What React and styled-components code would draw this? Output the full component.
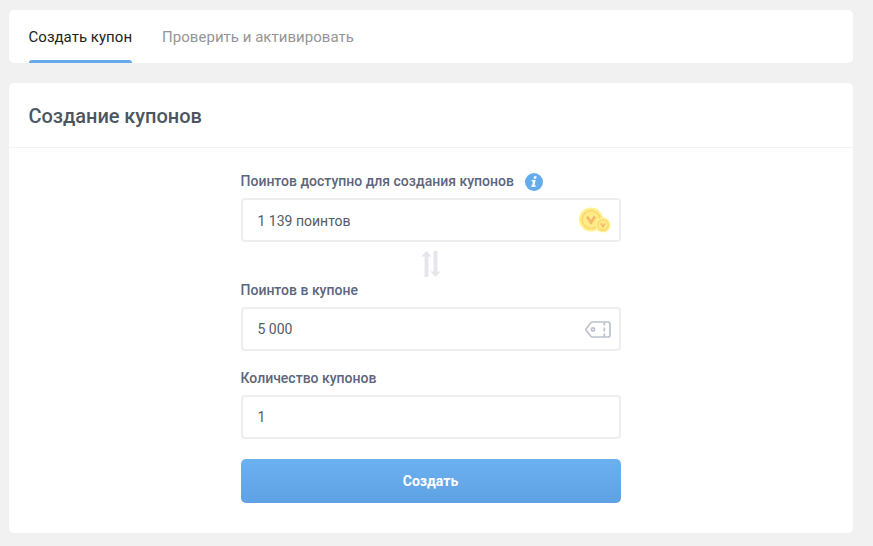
import React, { useState } from 'react';
import styled, { createGlobalStyle } from 'styled-components';

const GlobalStyle = createGlobalStyle`
  * {
    box-sizing: border-box;
  }

  body {
    margin: 0;
    background: #f1f1f1;
    font-family: Roboto, 'Liberation Sans', sans-serif;
  }
`;

const Page = styled.main`
  min-height: 546px;
  padding: 10px 20px 13px 9px;
`;

const Card = styled.section`
  background: #fff;
  border-radius: 5px;
`;

const Tabs = styled(Card)`
  display: flex;
  gap: 30px;
  height: 53px;
  padding: 0 19.5px;
  margin-bottom: 20px;
`;

const Tab = styled.button`
  display: flex;
  flex-direction: column;
  justify-content: space-between;
  height: 53px;
  padding: 17px 0 0;
  border: 0;
  background: none;
  font-family: inherit;
  font-size: 15px;
  line-height: 20px;
  letter-spacing: 0.03px;
  white-space: nowrap;
  color: ${props => (props.$active ? '#222' : '#959595')};
  cursor: pointer;

  &::after {
    content: '';
    width: 100%;
    height: 3px;
    border-radius: 3px 3px 0 0;
    background: ${props => (props.$active ? '#64a9e9' : 'transparent')};
  }
`;

const Panel = styled(Card)`
  height: 450px;
`;

const PanelHeader = styled.header`
  display: flex;
  align-items: center;
  height: 65px;
  padding: 2px 20px 0 19.5px;
  border-bottom: 1px solid #f3f3f3;
`;

const Title = styled.h1`
  margin: 0;
  font-size: 20px;
  line-height: 24px;
  font-weight: 500;
  letter-spacing: -0.05px;
  color: #4d5660;
`;

const Form = styled.form`
  display: flex;
  flex-direction: column;
  width: 380px;
  margin-left: 232px;
  padding-top: 23px;
`;

const Label = styled.label`
  display: flex;
  align-items: center;
  gap: 11px;
  height: 20px;
  margin: 0 0 7px -0.5px;
  font-size: 14px;
  font-weight: 500;
  color: #5c667c;

  svg {
    margin-top: 2px;
  }
`;

const InputBox = styled.div`
  display: flex;
  align-items: center;
  height: 44px;
  margin-bottom: ${props => props.$gap || 0}px;
  padding: 0 8px 0 14.5px;
  border: 2px solid #eee;
  border-radius: 4px;
`;

const Input = styled.input`
  flex: 1;
  min-width: 0;
  padding: ${props => (props.readOnly ? '1px 0 0' : '0 0 1px')};
  border: 0;
  outline: 0;
  background: none;
  font-family: inherit;
  font-size: 14px;
  line-height: 20px;
  color: #545c63;
`;

const Exchange = styled.div`
  display: flex;
  justify-content: center;
  height: 38px;
  padding-top: 9px;
`;

const SubmitButton = styled.button`
  height: 44px;
  padding: 0 1px 0 0;
  border: 0;
  border-radius: 5px;
  background: linear-gradient(#6bb0f1, #5fa2e3);
  font-family: inherit;
  font-size: 14px;
  font-weight: 700;
  color: #fff;
  cursor: pointer;
`;

const InfoIcon = () => (
  <svg width="18" height="18" viewBox="0 0 18 18">
    <circle cx="9" cy="9" r="9" fill="#65aced" />
    <path d="M9.1 3.2h2.5L11.1 5.8H8.6zM6.8 7h3.9l-1.2 5.3h1.2l-.3 1.6H6.3l.3-1.6h.6l.8-3.7H6.5z" fill="#fff" />
  </svg>
);

const CoinsIcon = () => (
  <svg width="32" height="26" viewBox="0 0 32 26">
    <circle cx="12" cy="12.5" r="12" fill="#fff08c" />
    <circle cx="12" cy="12.5" r="9" fill="#ffec85" stroke="#fdd575" strokeWidth="1.6" />
    <path d="M8 9.5l4 6 4-6" fill="none" stroke="#f3b970" strokeWidth="2.8" />
    <circle cx="24" cy="18" r="7.5" fill="#fff08c" />
    <circle cx="24" cy="18" r="5.3" fill="#ffec85" stroke="#fdd575" strokeWidth="1.2" />
    <path d="M21.8 16.4l2.2 3.4 2.2-3.4" fill="none" stroke="#f3b970" strokeWidth="1.7" />
  </svg>
);

const CouponIcon = () => (
  <svg width="26" height="17" viewBox="0 0 26 17" fill="none" stroke="#bcc1cd" strokeWidth="1.7">
    <path d="M7.5 1H23q2 0 2 2v11q0 2-2 2H7.5q-1 0-1.6-.7L1.4 9.7q-1-1.2 0-2.4l4.5-5.6Q6.5 1 7.5 1z" />
    <circle cx="8" cy="8.5" r="1.6" />
    <path d="M19.3 1v3.5M19.3 6.5v4M19.3 12.5V16" />
  </svg>
);

const ExchangeIcon = () => (
  <svg width="20" height="28" viewBox="0 0 20 28" fill="#e5e6ed">
    <path d="M5.5 0l5.2 5.5H7.4V26H3.6V5.5H.3z" />
    <path d="M12.6 0h3.8v20.5h3.3L14.5 26l-5.2-5.5h3.3z" />
  </svg>
);

const App = () => {
  const [tab, setTab] = useState('create');
  const [points, setPoints] = useState('5 000');
  const [count, setCount] = useState('1');

  return (
    <Page>
      <GlobalStyle />
      <Tabs as="nav">
        <Tab $active={tab === 'create'} onClick={() => setTab('create')}>
          Создать купон
        </Tab>
        <Tab $active={tab === 'check'} onClick={() => setTab('check')}>
          Проверить и активировать
        </Tab>
      </Tabs>
      <Panel>
        <PanelHeader>
          <Title>Создание купонов</Title>
        </PanelHeader>
        <Form onSubmit={e => e.preventDefault()}>
          <Label htmlFor="available">
            Поинтов доступно для создания купонов
            <InfoIcon />
          </Label>
          <InputBox>
            <Input id="available" value="1 139 поинтов" readOnly />
            <CoinsIcon />
          </InputBox>
          <Exchange>
            <ExchangeIcon />
          </Exchange>
          <Label htmlFor="points">Поинтов в купоне</Label>
          <InputBox $gap={17}>
            <Input id="points" value={points} onChange={e => setPoints(e.target.value)} />
            <CouponIcon />
          </InputBox>
          <Label htmlFor="count">Количество купонов</Label>
          <InputBox $gap={20}>
            <Input id="count" value={count} onChange={e => setCount(e.target.value)} />
          </InputBox>
          <SubmitButton type="submit">Создать</SubmitButton>
        </Form>
      </Panel>
    </Page>
  );
};

export default App;
